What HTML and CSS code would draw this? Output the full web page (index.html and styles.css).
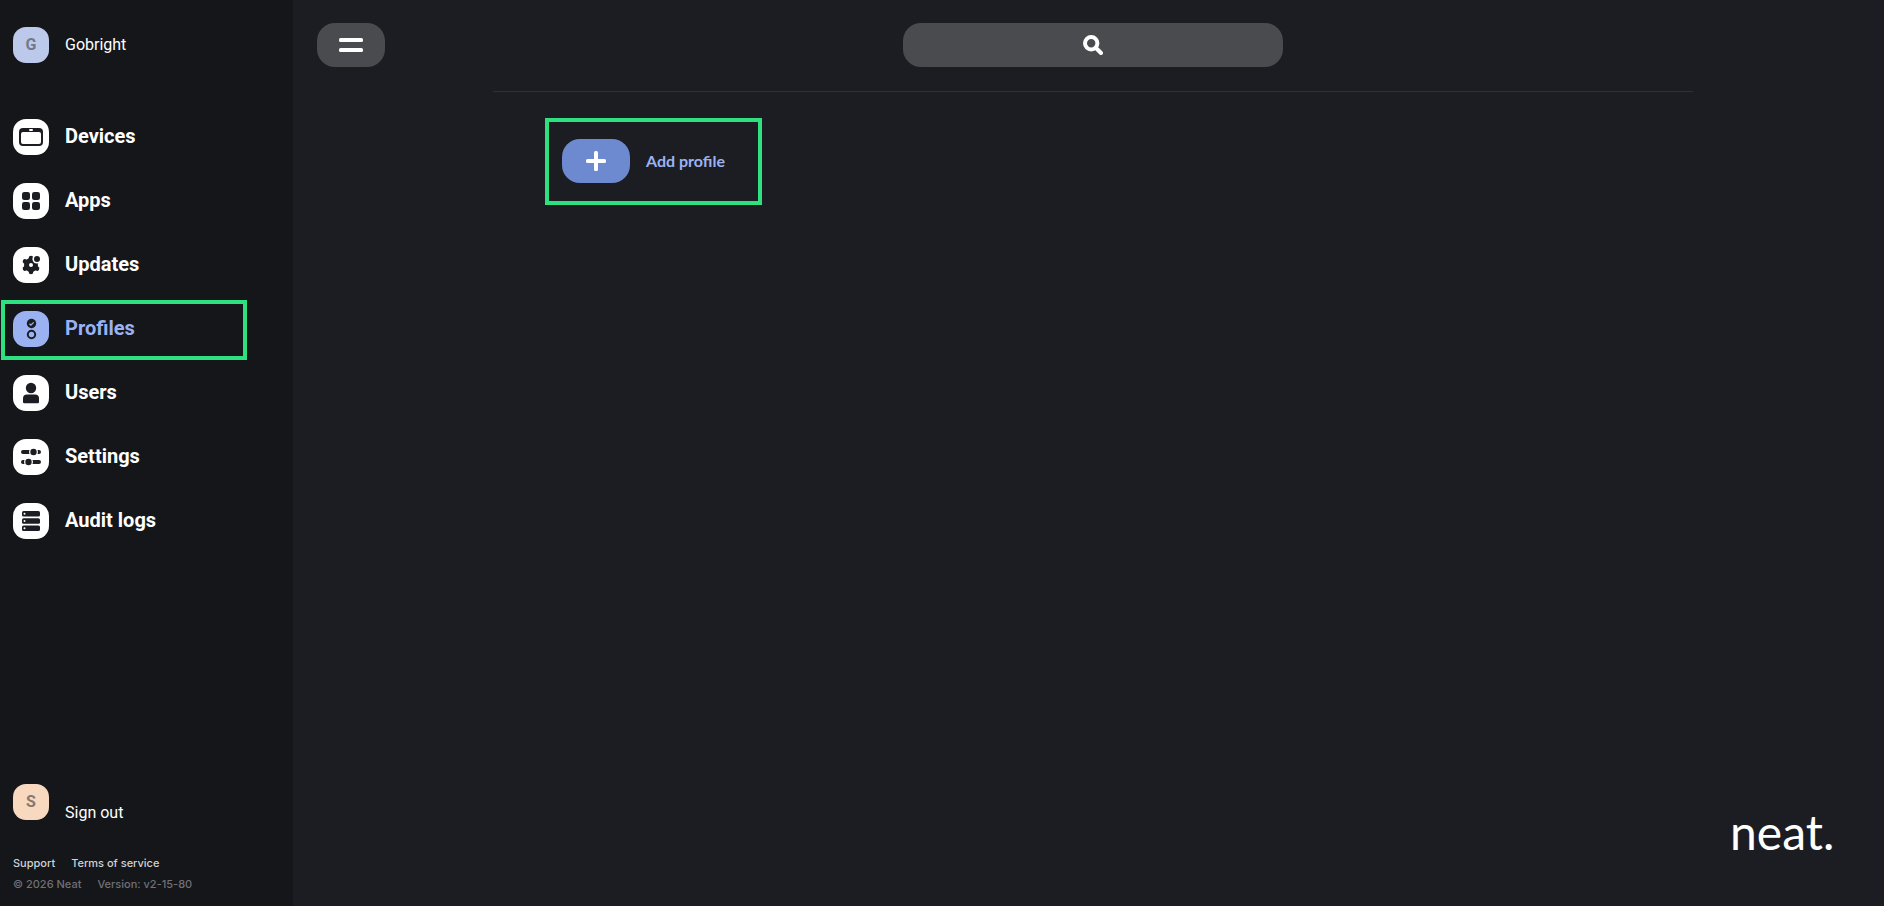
FILE: index.html
```html
<!DOCTYPE html>
<html lang="en">
<head>
<meta charset="utf-8">
<title>Profiles - Neat</title>
<link rel="stylesheet" href="styles.css">
</head>
<body>
<div class="app">
  <aside class="sidebar">
    <a class="row account" href="#"><span class="tile tile-org">G</span><span>Gobright</span></a>
    <nav class="nav" aria-label="Main">
      <a class="row" href="#"><span class="tile"><svg viewBox="0 0 36 36"><rect x="6" y="9" width="24" height="18" rx="4" fill="#1c1d22"/><rect x="8" y="13" width="20" height="12" rx="2" fill="#fff"/><rect x="16" y="10" width="4" height="2" rx="1" fill="#fff"/></svg></span><span>Devices</span></a>
      <a class="row" href="#"><span class="tile"><svg viewBox="0 0 36 36" fill="#1c1d22"><rect x="9" y="9" width="8" height="8" rx="2.3"/><rect x="19" y="9" width="8" height="8" rx="2.3"/><rect x="9" y="19" width="8" height="8" rx="2.3"/><rect x="19" y="19" width="8" height="8" rx="2.3"/></svg></span><span>Apps</span></a>
      <a class="row" href="#"><span class="tile"><svg viewBox="0 0 36 36"><path d="M18 11v14M12 14.5l12 7M24 14.5l-12 7" stroke="#1c1d22" stroke-width="4.6" stroke-linecap="round"/><circle cx="18" cy="18" r="7" fill="#1c1d22"/><circle cx="18" cy="18" r="2" fill="#fff"/><circle cx="24" cy="12" r="4.6" fill="#fff"/><circle cx="24" cy="12" r="3" fill="#1c1d22"/></svg></span><span>Updates</span></a>
      <a class="row current" href="#" aria-current="page"><span class="tile"><svg viewBox="0 0 36 36"><circle cx="18.5" cy="12.5" r="4.7" fill="#1c1d22"/><path d="M16.5 12.8l1.4 1.3 2.8-2.7" fill="none" stroke="#9bb2f2" stroke-width="1.3"/><circle cx="18.5" cy="23.5" r="3.7" fill="none" stroke="#1c1d22" stroke-width="2"/></svg></span><span>Profiles</span></a>
      <a class="row" href="#"><span class="tile"><svg viewBox="0 0 36 36" fill="#1c1d22"><circle cx="18" cy="13" r="5.2"/><path d="M10 27v-3.5a4 4 0 0 1 4-4h8a4 4 0 0 1 4 4V27a1.2 1.2 0 0 1-1.2 1.2H11.2A1.2 1.2 0 0 1 10 27z"/></svg></span><span>Users</span></a>
      <a class="row" href="#"><span class="tile"><svg viewBox="0 0 36 36" fill="#1c1d22"><path d="M10 11h6.5a4.5 4.5 0 0 0 0 4H10a2 2 0 0 1 0-4zM24.5 11H26a2 2 0 0 1 0 4h-1.5a4.5 4.5 0 0 0 0-4zM10 21h1.500a4.500 4.500 0 0 0 0 4H10a2 2 0 0 1 0-4zM19.500 21H26a2 2 0 0 1 0 4h-6.500a4.500 4.500 0 0 0 0-4z"/><circle cx="20.5" cy="13" r="3.2"/><circle cx="15.5" cy="23" r="3.2"/></svg></span><span>Settings</span></a>
      <a class="row" href="#"><span class="tile"><svg viewBox="0 0 36 36"><g fill="#1c1d22"><rect x="9" y="8" width="18" height="5.6" rx="1.6"/><rect x="9" y="15.2" width="18" height="5.6" rx="1.6"/><rect x="9" y="22.4" width="18" height="5.6" rx="1.6"/></g><g fill="#fff"><circle cx="11.5" cy="10.8" r="1"/><circle cx="11.5" cy="18" r="1"/><circle cx="11.5" cy="25.2" r="1"/></g></svg></span><span>Audit logs</span></a>
    </nav>
    <a class="row signout" href="#"><span class="tile tile-user">S</span><span class="signout-text">Sign out</span></a>
    <footer class="legal">
      <div class="legal-line links"><a href="#">Support</a><a href="#">Terms of service</a></div>
      <div class="legal-line"><span>© 2026 Neat</span><span>Version: v2-15-80</span></div>
    </footer>
  </aside>
  <main class="main">
    <header class="topbar">
      <button class="pill menu" type="button" aria-label="Menu"><svg width="24" height="14" viewBox="0 0 24 14" fill="#fff"><rect width="24" height="4" rx="1.5"/><rect y="10" width="24" height="4" rx="1.5"/></svg></button>
      <form class="search">
        <input class="pill search-box" type="search" aria-label="Search">
        <svg class="search-icon" width="20" height="20" viewBox="0 0 20 20" fill="none" stroke="#fff"><circle cx="8.2" cy="8.2" r="6.2" stroke-width="4"/><path d="M13 13l5 5" stroke-width="4" stroke-linecap="round"/></svg>
      </form>
    </header>
    <section class="content">
      <button class="add" type="button"><span class="add-icon"><svg width="20" height="20" viewBox="0 0 20 20" fill="#fff"><rect x="8" width="4" height="20" rx="1.5"/><rect y="8" width="20" height="4" rx="1.5"/></svg></span><span>Add profile</span></button>
    </section>
    <svg class="logo" width="104" height="36" viewBox="0 0 104 36" role="img" aria-label="neat."><text x="-2" y="32">neat.</text></svg>
  </main>
</div>
</body>
</html>
```

FILE: styles.css
```css
* { box-sizing: border-box; }
body {
  margin: 0;
  background: #1c1d22;
  color: #fff;
  font: 16px/20px Roboto, "Liberation Sans", sans-serif;
}
a { color: inherit; text-decoration: none; }
button, input { font: inherit; color: inherit; border: 0; }
svg { display: block; }
.app { display: flex; min-height: 100vh; }

.sidebar {
  flex: 0 0 293px;
  display: flex;
  flex-direction: column;
  padding: 27px 0 11px;
  background: #15161a;
}
.row {
  display: flex;
  align-items: center;
  gap: 16px;
  padding-left: 13px;
}
.tile {
  flex: none;
  display: grid;
  place-items: center;
  width: 36px;
  height: 36px;
  border-radius: 13px;
  background: #fff;
}
.tile svg { width: 36px; height: 36px; }
.tile-org, .tile-user { font-weight: 700; color: #71798a; }
.tile-org { background: #bdc9ea; }
.tile-user { background: #f8d9c0; color: #857970; }
.nav {
  display: flex;
  flex-direction: column;
  gap: 28px;
  margin-top: 56px;
  font-size: 20px;
  font-weight: 700;
}
.nav .row { line-height: 24px; }
.nav .row > span:last-child { padding-bottom: 2px; }
.current { position: relative; color: #9bb2f2; }
.current .tile { background: #9bb2f2; }
.current::after {
  content: "";
  position: absolute;
  inset: -11px 46px -13px 1px;
  border: 4px solid #2fe080;
}
.signout { margin-top: auto; }
.signout-text { padding-top: 22px; }
.legal {
  margin-top: 33px;
  padding-left: 13px;
  color: #707176;
  font: 500 11px/21px Inter, "Liberation Sans", sans-serif;
}
.signout + .legal { margin-top: 30px; }
.legal-line { display: flex; gap: 16px; }
.links { color: #d2d2d4; }

.main {
  flex: 1;
  display: flex;
  flex-direction: column;
  padding-left: 9px;
}
.topbar {
  display: grid;
  grid-template-columns: 1fr 380px 1fr;
  padding: 23px 15px 24px;
}
.pill { height: 44px; border-radius: 18px; background: #4a4b4e; }
.menu { display: grid; place-items: center; width: 68px; padding: 0; }
.search { position: relative; }
.search-box { display: block; width: 100%; padding: 0 18px; appearance: none; outline: 0; }
.search-icon {
  position: absolute;
  inset: 0;
  margin: auto;
  pointer-events: none;
}
.content {
  width: 100%;
  max-width: 1200px;
  margin: 0 auto;
  padding: 26px 52px;
  border-top: 1px solid #303136;
}
.add {
  display: flex;
  align-items: center;
  gap: 16px;
  width: 217px;
  padding: 17px 13px 18px;
  border: 4px solid #2fe080;
  background: none;
  color: #9bb2f2;
  font: 700 16px/20px Lato, "Liberation Sans", sans-serif;
}
.add-icon {
  display: grid;
  place-items: center;
  width: 68px;
  height: 44px;
  border-radius: 18px;
  background: #6d8ad0;
}
.logo {
  margin: auto 48px 52px auto;
  overflow: visible;
}
.logo text {
  fill: #fff;
  font: 400 48px Lato, "Liberation Sans", sans-serif;
}
```
